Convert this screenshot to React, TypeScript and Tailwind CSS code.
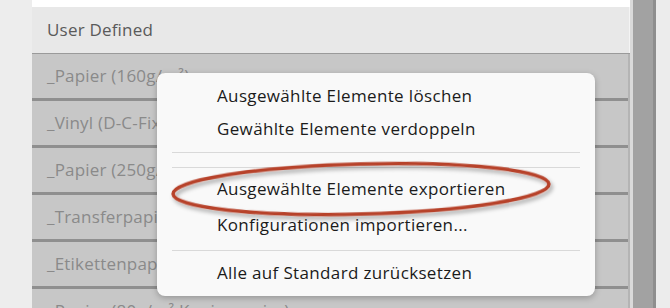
const ROWS = [
  "_Papier (160g/m²)",
  "_Vinyl (D-C-Fix)",
  "_Papier (250g/m²)",
  "_Transferpapier",
  "_Etikettenpapier",
  "_Papier (80g/m² Kopierpapier)",
];

function MenuItem({ label, tall }: { label: string; tall?: boolean }) {
  return (
    <div
      className={
        "flex shrink-0 items-center pl-[60px] text-[17px] tracking-[0.35px] text-[#1b1b1b] " +
        (tall ? "h-[36px]" : "h-[33px]")
      }
    >
      {label}
    </div>
  );
}

function Separator() {
  return <div className="mx-[15px] h-px shrink-0 bg-[#d9d9d9]" />;
}

export default function App() {
  return (
    <div
      className="relative flex h-[308px] w-[670px] overflow-hidden bg-[#ededed]"
      style={{ fontFamily: '"Open Sans", "Noto Sans", sans-serif' }}
    >
      <div className="w-[32px] shrink-0" />

      {/* Liste */}
      <div className="flex w-[598px] shrink-0 flex-col overflow-hidden">
        <div className="h-[7px] shrink-0 bg-white" />
        <div className="flex h-[46px] shrink-0 items-center border-r border-[#f4f4f4] bg-[#e8e8e8] pl-[15px] text-[17px] tracking-[0.2px] text-[#5a5a5a]">
          User Defined
        </div>
        <div className="h-px shrink-0 bg-[#9a9a9a]" />
        {ROWS.map((row) => (
          <div key={row} className="flex shrink-0 flex-col border-r-[2px] border-[#b4b4b4]">
            <div className="flex h-[44px] items-center bg-[#c7c7c7] pl-[15px] text-[17px] tracking-[0.2px] text-[#8a8a8a]">
              {row}
            </div>
            <div className="h-[3px] bg-[#8f8f8f]" />
          </div>
        ))}
      </div>

      {/* Scrollbar */}
      <div className="w-[3px] shrink-0 bg-[#dadada]" />
      <div className="w-[20px] shrink-0 bg-[#a2a2a2]" />
      <div className="w-[3px] shrink-0 bg-[#8e8e8e]" />
      <div className="flex-1 bg-[#ececec]" />

      {/* Kontextmenü */}
      <div className="absolute left-[157px] top-[73px] flex h-[223px] w-[438px] flex-col rounded-[8px] bg-[#f9f9f9] pt-[6px] shadow-[0_2px_6px_rgba(0,0,0,0.25)]">
        <MenuItem label="Ausgewählte Elemente löschen" />
        <MenuItem label="Gewählte Elemente verdoppeln" />
        <div className="h-[7px] shrink-0" />
        <Separator />
        <div className="h-[14px] shrink-0" />
        <Separator />
        <div className="h-[3px] shrink-0" />
        <MenuItem label="Ausgewählte Elemente exportieren" tall />
        <MenuItem label="Konfigurationen importieren..." tall />
        <div className="h-[7px] shrink-0" />
        <Separator />
        <div className="h-[4px] shrink-0" />
        <MenuItem label="Alle auf Standard zurücksetzen" tall />
      </div>

      {/* Markierung */}
      <svg className="pointer-events-none absolute left-0 top-0" width="670" height="308">
        <defs>
          <filter id="sh" x="-10%" y="-50%" width="120%" height="200%">
            <feDropShadow dx="2" dy="3" stdDeviation="2" floodColor="#000" floodOpacity="0.35" />
          </filter>
        </defs>
        <ellipse
          cx="361"
          cy="189"
          rx="188"
          ry="25"
          transform="rotate(-1.5 361 189)"
          fill="none"
          stroke="#b7432c"
          strokeWidth="3.5"
          filter="url(#sh)"
        />
      </svg>
    </div>
  );
}
